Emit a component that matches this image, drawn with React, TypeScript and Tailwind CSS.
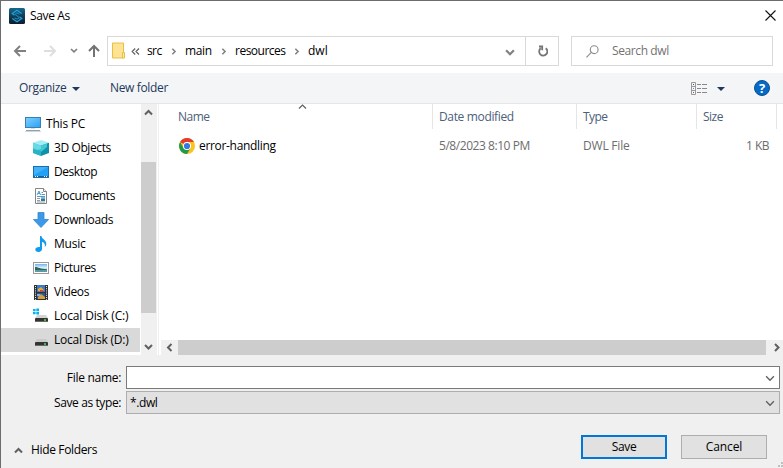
import type { ReactNode } from "react";

type Dir = "up" | "down" | "left" | "right";

const chevronPaths: Record<Dir, string> = {
  up: "M1 6.5 4.5 3 8 6.5",
  down: "M1 3 4.5 6.5 8 3",
  left: "M6.5 1 3 4.5 6.5 8",
  right: "M3 1 6.5 4.5 3 8",
};

function Chevron({ dir, color = "#606060", size = 9, weight = 2 }: { dir: Dir; color?: string; size?: number; weight?: number }) {
  return (
    <svg width={size} height={size} viewBox="0 0 9 9" fill="none" stroke={color} strokeWidth={weight} className="shrink-0">
      <path d={chevronPaths[dir]} />
    </svg>
  );
}

function Icon({ children }: { children: ReactNode }) {
  return (
    <svg width="16" height="16" viewBox="0 0 16 16" className="shrink-0">
      {children}
    </svg>
  );
}

function AppLogo() {
  return (
    <Icon>
      <defs>
        <linearGradient id="logo" x1="0" y1="0" x2="0" y2="1">
          <stop offset="0" stopColor="#17688a" />
          <stop offset=".5" stopColor="#123c55" />
          <stop offset="1" stopColor="#101b2c" />
        </linearGradient>
      </defs>
      <rect width="16" height="16" rx="1.5" fill="url(#logo)" />
      <path d="M12.7 5.5 8 2.3 3.2 5.5 5.5 7.3M3.3 10.5 8 13.7l4.8-3.2-2.3-1.8" fill="none" stroke="#1fa4dc" strokeWidth="1.2" />
      <path d="M10.5 6.3 8 4.8 6 6.2l4.3 3.4L8 11.2 5.5 9.7" fill="none" stroke="#1687bb" strokeWidth="1.1" />
    </Icon>
  );
}

function PcIcon() {
  return (
    <Icon>
      <defs>
        <linearGradient id="screen" x1="0" y1="0" x2="1" y2="1">
          <stop offset="0" stopColor="#7fd0ff" />
          <stop offset="1" stopColor="#2ba0f5" />
        </linearGradient>
      </defs>
      <rect x=".5" y="1.5" width="15" height="10" fill="url(#screen)" stroke="#3b7fae" />
      <path d="M6 12h4v1H6z" fill="#d5dde2" />
      <path d="M1 14.5h14" stroke="#8ba0b0" />
      <path d="M0 15.5h16" stroke="#c3ced6" strokeWidth=".8" />
    </Icon>
  );
}

function CubeIcon() {
  return (
    <Icon>
      <path d="M0 2.8 8 0l8 2.8-8 2.6z" fill="#a5edf5" />
      <path d="M0 2.8l8 2.6V16l-8-3z" fill="#35c3d3" />
      <path d="M16 2.8 8 5.4V16l8-3z" fill="#0d93a8" />
      <path d="M0 2.8 8 5.4V9L4 10 0 8z" fill="#69d9e4" />
      <path d="M8 5.4 14 3.5V7l-6 5z" fill="#45c6d5" />
      <path d="M0 9l8 2v5l-8-3z" fill="#20a9bb" opacity=".6" />
    </Icon>
  );
}

function DesktopIcon() {
  return (
    <Icon>
      <rect x=".5" y="2.5" width="15" height="11" fill="#23a0f4" stroke="#176fae" />
      <path d="M1 3h14L1 11z" fill="#42b2fa" />
      <path d="M1 12.5h14" stroke="#135d98" />
      <path d="M2 12.5h1m1 0h1m6 0h1m1 0h1" stroke="#fff" />
    </Icon>
  );
}

function DocumentIcon() {
  return (
    <Icon>
      <path d="M2.5.5h8l3 3v12h-11z" fill="#fff" stroke="#858585" />
      <path d="M10.5.5v3h3" fill="#eee" stroke="#858585" />
      <path d="M4 7 6 3l1.5 4M5 5.5h2M8.5 4.5H10M8.5 6.5H12M4 8.5h8" fill="none" stroke="#4d9bc9" />
      <path d="M4 10.5h3M4 12.5h3M4 14h8" stroke="#87929b" strokeWidth=".9" />
      <path d="M8 9.5h4V13H8z" fill="#36798f" />
      <path d="M8 9.5h4v1.3H8z" fill="#75baf0" />
    </Icon>
  );
}

function DownloadIcon() {
  return (
    <Icon>
      <path d="M5 .5h6v7h4.6L8 15.5.4 7.5H5z" fill="#3b99e8" stroke="#2f86cf" strokeWidth=".8" />
    </Icon>
  );
}

function MusicIcon() {
  return (
    <Icon>
      <path d="M7 0h1.5c0 3 5 3.8 4.8 8-.1 1.3-.8 2.3-1.5 3 .6-2.6-.3-4.4-2.8-5.2v7.3c0 1.6-1.5 2.9-3.5 2.9S2.3 15 2.3 13.5 4 10.7 7 11z" fill="#109af0" />
    </Icon>
  );
}

function PictureIcon() {
  return (
    <Icon>
      <defs>
        <linearGradient id="view" x1="0" y1="0" x2="0" y2="1">
          <stop offset="0" stopColor="#6eb3ed" />
          <stop offset=".45" stopColor="#d9effa" />
          <stop offset="1" stopColor="#8bbcd1" />
        </linearGradient>
      </defs>
      <rect x=".5" y="2.5" width="15" height="11" fill="#fff" stroke="#999" />
      <path d="M2 4h12v8H2z" fill="url(#view)" />
      <path d="M2 7c3 0 5 2 12 2.2V10H2z" fill="#2e6557" />
      <path d="M2 10h12v2H2z" fill="#5b9aa9" />
    </Icon>
  );
}

function VideoIcon() {
  return (
    <Icon>
      <path d="M1 1h14v15H1z" fill="#303030" />
      <path d="M4 1h8v7H4z" fill="#3979d3" />
      <path d="M4 9h8v6H4z" fill="#2455a6" />
      <path d="M5 5l3-2 3 3-2 2-4-1z" fill="#e9aa26" />
      <path d="M7 6h3v2H7z" fill="#cf4538" />
      <path d="M5 13l3-3 4 3v2H5z" fill="#d3a13a" />
      <path d="M4 10h3v2H4z" fill="#7eb3f3" />
      <path d="M2.5 2v14M13.5 2v14" stroke="#f0f0f0" strokeDasharray="1 1.2" />
    </Icon>
  );
}

function DiskIcon({ windows = false }: { windows?: boolean }) {
  return (
    <Icon>
      <path d="M4 7h9l2 3H2z" fill={windows ? "#d4d4d4" : "#cacaca"} />
      <rect x="2" y="10" width="13" height="4" rx="1" fill="#333" />
      <path d="M2.5 13.5h12" stroke="#777" strokeWidth=".8" />
      <path d="M11 12h2" stroke="#42e45b" strokeWidth="1.5" />
      {windows && <path d="M0 1h2.6v2.3H0zm3.3-.4H6v2.7H3.3zM0 4h2.6v2.3H0zm3.3 0H6v2.6H3.3z" fill="#00b4f1" />}
    </Icon>
  );
}

function ChromeIcon() {
  return (
    <Icon>
      <circle cx="8" cy="8" r="8" fill="#fcc31e" />
      <path d="M8 8 1.1 4A8 8 0 0 1 14.9 4H8z" fill="#e33b2e" />
      <path d="M1.1 4A8 8 0 0 0 8 16l3.5-6L8 8 4.5 10z" fill="#229a48" />
      <circle cx="8" cy="8" r="4" fill="#fff" />
      <circle cx="8" cy="8" r="3.1" fill="#3478e5" />
    </Icon>
  );
}

const places: { label: string; icon: ReactNode; track: string }[] = [
  { label: "3D Objects", icon: <CubeIcon />, track: "tracking-[-0.4px]" },
  { label: "Desktop", icon: <DesktopIcon />, track: "tracking-[-0.45px]" },
  { label: "Documents", icon: <DocumentIcon />, track: "tracking-[-0.35px]" },
  { label: "Downloads", icon: <DownloadIcon />, track: "tracking-[-0.4px]" },
  { label: "Music", icon: <MusicIcon />, track: "tracking-[-0.2px]" },
  { label: "Pictures", icon: <PictureIcon />, track: "tracking-[-0.4px]" },
  { label: "Videos", icon: <VideoIcon />, track: "tracking-[-0.35px]" },
  { label: "Local Disk (C:)", icon: <DiskIcon windows />, track: "tracking-[-0.15px]" },
  { label: "Local Disk (D:)", icon: <DiskIcon />, track: "tracking-[-0.22px]" },
];

function TitleBar() {
  return (
    <header className="flex h-[30px] items-center pl-2 pr-[7px]">
      <AppLogo />
      <span className="ml-[5px] text-black">Save As</span>
      <svg width="11" height="11" viewBox="0 0 11 11" className="-mt-px ml-auto" stroke="#111" strokeWidth="1.1">
        <path d="M.5.5l10 10M10.5.5l-10 10" />
      </svg>
    </header>
  );
}

function AddressBar() {
  return (
    <nav className="mt-[5px] flex h-[30px] items-center">
      <svg width="106" height="30" viewBox="0 0 106 30" fill="none" className="shrink-0" strokeWidth="2">
        <path d="M25 15H14m5-5-5 5 5 5" stroke="#808080" />
        <path d="M43 15h11m-5-5 5 5-5 5" stroke="#dedede" />
        <path d="m70 13 3 2.8 3-2.8" stroke="#808080" strokeWidth="1.7" />
        <path d="M93 21V10m-5 5 5-5 5 5" stroke="#737373" />
      </svg>
      <div className="flex h-[30px] w-[419px] shrink-0 items-center border border-[#d9d9d9] pl-1">
        <svg width="14" height="18" viewBox="0 0 14 18" className="shrink-0">
          <path d="M.5 1h11v15H.5z" fill="#ffe394" stroke="#e8bf45" />
          <path d="M10.5 10.5h2V16h-2z" fill="#ffe9a7" stroke="#e8bf45" />
        </svg>
        <svg width="9" height="9" viewBox="0 0 9 9" fill="none" stroke="#606060" strokeWidth="1.2" className="ml-[5px] shrink-0">
          <path d="M4.2 1.5 1.2 4.5l3 3M8 1.5 5 4.5l3 3" />
        </svg>
        <span className="ml-[7px] w-[23px] shrink-0 tracking-[-0.6px]">src</span>
        <Chevron dir="right" color="#808080" size={7} />
        <span className="ml-[8px] w-[35px] shrink-0">main</span>
        <Chevron dir="right" color="#808080" size={7} />
        <span className="ml-[8px] w-[58px] shrink-0 tracking-[-0.5px]">resources</span>
        <Chevron dir="right" color="#808080" size={7} />
        <span className="ml-[8px] tracking-normal">dwl</span>
        <span className="ml-auto mr-[10px] mt-px"><Chevron dir="down" color="#808080" size={10} /></span>
      </div>
      <div className="-ml-px flex h-[30px] w-[34px] items-center justify-center border border-[#d9d9d9]">
        <svg width="11" height="12" viewBox="0 0 11 12" fill="none" stroke="#757575" strokeWidth="1.8">
          <path d="M8.7 3.2a4.1 4.1 0 1 1-5 .1M2 1.5h3.2v3.8" />
        </svg>
      </div>
      <div className="ml-3 flex h-[30px] w-[202px] items-center border border-[#d9d9d9] pl-[14px] text-[#737373]">
        <svg width="13" height="13" viewBox="0 0 13 13" fill="none" stroke="#8b8b92" strokeWidth="1.1">
          <circle cx="8.2" cy="4.7" r="3.9" />
          <path d="m5.3 7.4-4.8 5" />
        </svg>
        <span className="ml-[13px] tracking-[-0.4px]">Search dwl</span>
      </div>
    </nav>
  );
}

function Toolbar() {
  return (
    <div className="mt-[7px] flex h-[31px] items-center border-b border-[#e5e6e8] bg-[#f4f5f7] pl-[18px] pr-[13px] text-[#1e395b]">
      <span className="w-[52px]">Organize</span>
      <svg width="8" height="4" viewBox="0 0 8 4" className="ml-px mt-px" fill="#1e395b"><path d="M0 0h8L4 4z" /></svg>
      <span className="ml-[30px]">New folder</span>
      <svg width="17" height="13" viewBox="0 0 17 13" className="ml-auto" fill="none">
        <path d="M.5.5h4v12h-4zM.5 4.5h4M.5 8.5h4" stroke="#999" />
        <path d="M6 2.5h4m1 0h5M6 6.5h4m1 0h5M6 10.5h4m1 0h5" stroke="#888" />
        <path d="M2 2.5h1" stroke="#555" /><path d="M2 6.5h1" stroke="#38a1e5" /><path d="M2 10.5h1" stroke="#d33" />
      </svg>
      <svg width="8" height="4" viewBox="0 0 8 4" className="ml-[9px] mt-px" fill="#1e395b"><path d="M0 0h8L4 4z" /></svg>
      <span className="ml-[29px] flex size-4 items-center justify-center rounded-full border border-[#0a4f91] bg-[#0569c8] text-[13px] font-bold leading-none tracking-normal text-white">?</span>
    </div>
  );
}

function FolderTree() {
  return (
    <aside className="flex w-[158px] shrink-0 border-r border-[#f0f0f0]">
      <div className="w-[140px] pt-2">
        <div className="flex h-6 items-center pl-6"><PcIcon /><span className="ml-[5px] tracking-[-0.2px]">This PC</span></div>
        {places.map((p, i) => (
          <div key={p.label} className={`flex h-6 items-center pl-8 ${i === 8 ? "mr-px bg-[#d9d9d9]" : ""}`}>
            {p.icon}
            <span className={`ml-[5px] whitespace-nowrap ${p.track}`}>{p.label}</span>
          </div>
        ))}
      </div>
      <div className="flex w-4 flex-col items-center bg-[#f0f0f0]">
        <div className="flex h-[58px] items-start pr-px pt-1"><Chevron dir="up" /></div>
        <div className="h-[151px] w-[15px] self-start bg-[#cdcdcd]" />
        <div className="mt-auto pb-1 pr-px"><Chevron dir="down" /></div>
      </div>
    </aside>
  );
}

function FileList() {
  return (
    <main className="flex min-w-0 flex-1 flex-col pl-[2px]">
      <div className="flex h-[25px] items-center text-[#4c607a]">
        <div className="flex h-full w-[272px] items-center border-r border-[#e5e5e5] pl-[17px]">
          <span className="w-[34px] tracking-[-0.5px]">Name</span>
          <span className="mb-[20px] ml-[86px]"><Chevron dir="up" size={9} weight={1.2} /></span>
        </div>
        <div className="flex h-full w-36 items-center border-r border-[#e5e5e5] pl-[6px]">Date modified</div>
        <div className="flex h-full w-[120px] items-center border-r border-[#e5e5e5] pl-[6px] tracking-[-0.6px]">Type</div>
        <div className="flex h-full w-20 items-center border-r border-[#e5e5e5] pl-[6px] tracking-[-0.5px]">Size</div>
      </div>
      <div className="mt-[5px] flex h-[23px] items-center text-[#6d6d6d]">
        <div className="flex w-[278px] items-center pl-[18px] text-black"><ChromeIcon /><span className="ml-1 tracking-[-0.32px]">error-handling</span></div>
        <span className="w-36 tracking-[-0.45px]">5/8/2023 8:10 PM</span>
        <span className="w-[140px] tracking-[-0.2px]">DWL File</span>
        <span className="w-[46px] text-right tracking-[-0.5px]">1 KB</span>
      </div>
      <div className="mt-auto flex h-[15px] items-center bg-[#f0f0f0] pl-[4px] pr-[2px]">
        <Chevron dir="left" />
        <div className="ml-[4px] h-full w-[588px] bg-[#cdcdcd]" />
        <span className="ml-auto"><Chevron dir="right" /></span>
      </div>
    </main>
  );
}

function Footer() {
  return (
    <footer className="relative h-[113px] bg-[#f0f0f0] pr-[3px] pt-[11px]">
      <div className="flex h-[23px] items-center">
        <label className="w-[120px] text-right tracking-[-0.3px]">File name:</label>
        <div className="ml-[5px] flex h-full flex-1 items-center justify-end border border-[#7a7a7a] bg-white pr-1"><Chevron dir="down" size={10} weight={1.2} /></div>
      </div>
      <div className="mt-[2px] flex h-[23px] items-center">
        <label className="w-[120px] text-right tracking-[-0.4px]">Save as type:</label>
        <div className="ml-[5px] flex h-full flex-1 items-center justify-between border border-[#adadad] bg-[#e1e1e1] pl-[3px] pr-1"><span className="tracking-[-0.4px]">*.dwl</span><Chevron dir="down" size={10} weight={1.2} /></div>
      </div>
      <div className="mt-[21px] flex items-center pl-[13px] pr-[13px]">
        <span className="mt-[6px]"><Chevron dir="up" /></span>
        <span className="ml-2 mt-[6px]">Hide Folders</span>
        <button className="ml-auto h-6 w-[86px] border-2 border-[#0078d7] bg-[#e1e1e1]">Save</button>
        <button className="ml-[14px] h-6 w-[86px] border border-[#adadad] bg-[#e1e1e1] tracking-[-0.1px]">Cancel</button>
      </div>
      <svg width="6" height="6" viewBox="0 0 6 6" className="absolute bottom-0 right-0" fill="#bfbfbf">
        <path d="M4 0h2v2H4zM1 3h2v2H1zM4 3h2v2H4z" />
      </svg>
    </footer>
  );
}

export default function App() {
  return (
    <div className="flex h-[468px] w-[783px] flex-col overflow-hidden border-l border-t border-[#6d6d6d] bg-white font-['Open_Sans','Noto_Sans',sans-serif] text-[12px] leading-4 tracking-[-0.35px] text-black">
      <TitleBar />
      <AddressBar />
      <Toolbar />
      <div className="flex h-[251px]">
        <FolderTree />
        <FileList />
      </div>
      <Footer />
    </div>
  );
}
